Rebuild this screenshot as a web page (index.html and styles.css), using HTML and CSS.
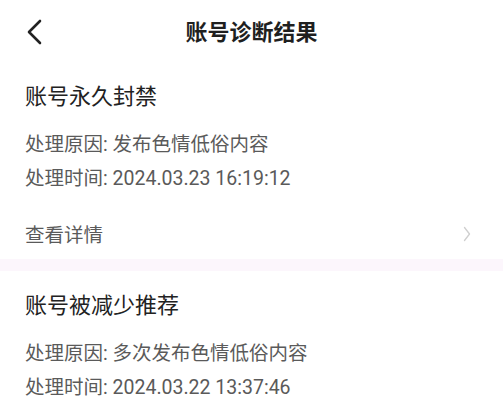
FILE: index.html
```html
<!DOCTYPE html>
<html lang="zh-CN">
<head>
<meta charset="utf-8">
<title>账号诊断结果</title>
<link rel="stylesheet" href="styles.css">
</head>
<body>
<header class="topbar">
  <div class="topbar-left">
    <svg class="back" width="16" height="26" viewBox="0 0 16 26" aria-hidden="true">
      <polyline points="14,2 3,13 14,24" fill="none" stroke="#222" stroke-width="2.6" stroke-linecap="round" stroke-linejoin="round"/>
    </svg>
  </div>
  <h1 class="title">账号诊断结果</h1>
  <div class="topbar-right"></div>
</header>

<section class="card first">
  <h2 class="card-title">账号永久封禁</h2>
  <div class="info">
    <p class="line">处理原因: 发布色情低俗内容</p>
    <p class="line">处理时间: 2024.03.23 16:19:12</p>
  </div>
  <div class="details">
    <span>查看详情</span>
    <svg class="arrow" width="8" height="16" viewBox="0 0 8 16" aria-hidden="true">
      <polyline points="1.5,1.5 6.5,8 1.5,14.5" fill="none" stroke="#cfcfcf" stroke-width="1.3" stroke-linecap="round" stroke-linejoin="round"/>
    </svg>
  </div>
</section>

<div class="divider"></div>

<section class="card second">
  <h2 class="card-title">账号被减少推荐</h2>
  <div class="info">
    <p class="line">处理原因: 多次发布色情低俗内容</p>
    <p class="line">处理时间: 2024.03.22 13:37:46</p>
  </div>
</section>
</body>
</html>
```

FILE: styles.css
```css
* {
  box-sizing: border-box;
}

html, body {
  margin: 0;
  padding: 0;
  background: #ffffff;
}

body {
  font-family: Roboto, "Noto Sans CJK SC", "Noto Sans", sans-serif;
  color: #222222;
  width: 503px;
  overflow: hidden;
}

.topbar {
  height: 66px;
  display: grid;
  grid-template-columns: 1fr auto 1fr;
  align-items: center;
}

.topbar-left {
  display: flex;
  align-items: center;
  padding-left: 26px;
  padding-bottom: 2px;
}

.back {
  display: block;
}

.title {
  margin: 0;
  font-size: 22px;
  font-weight: 700;
  line-height: 30px;
  color: #1f1f1f;
  letter-spacing: 0;
}

.card {
  padding: 0 25px 0 25px;
}

.card.first {
  padding-top: 16px;
}

.card.second {
  padding-top: 20px;
}

.card-title {
  margin: 0;
  font-size: 22px;
  font-weight: 400;
  line-height: 30px;
  color: #222222;
}

.info {
  margin-top: 16px;
  display: flex;
  flex-direction: column;
}

.line {
  margin: 0;
  font-size: 19.5px;
  line-height: 34px;
  color: #5a5a5a;
}

.details {
  margin-top: 15px;
  height: 48px;
  display: flex;
  align-items: center;
  justify-content: space-between;
  font-size: 19.5px;
  color: #5a5a5a;
  padding-right: 7px;
  padding-bottom: 3px;
}

.arrow {
  display: block;
}

.divider {
  height: 12px;
  background: #fcf6fc;
}
```
